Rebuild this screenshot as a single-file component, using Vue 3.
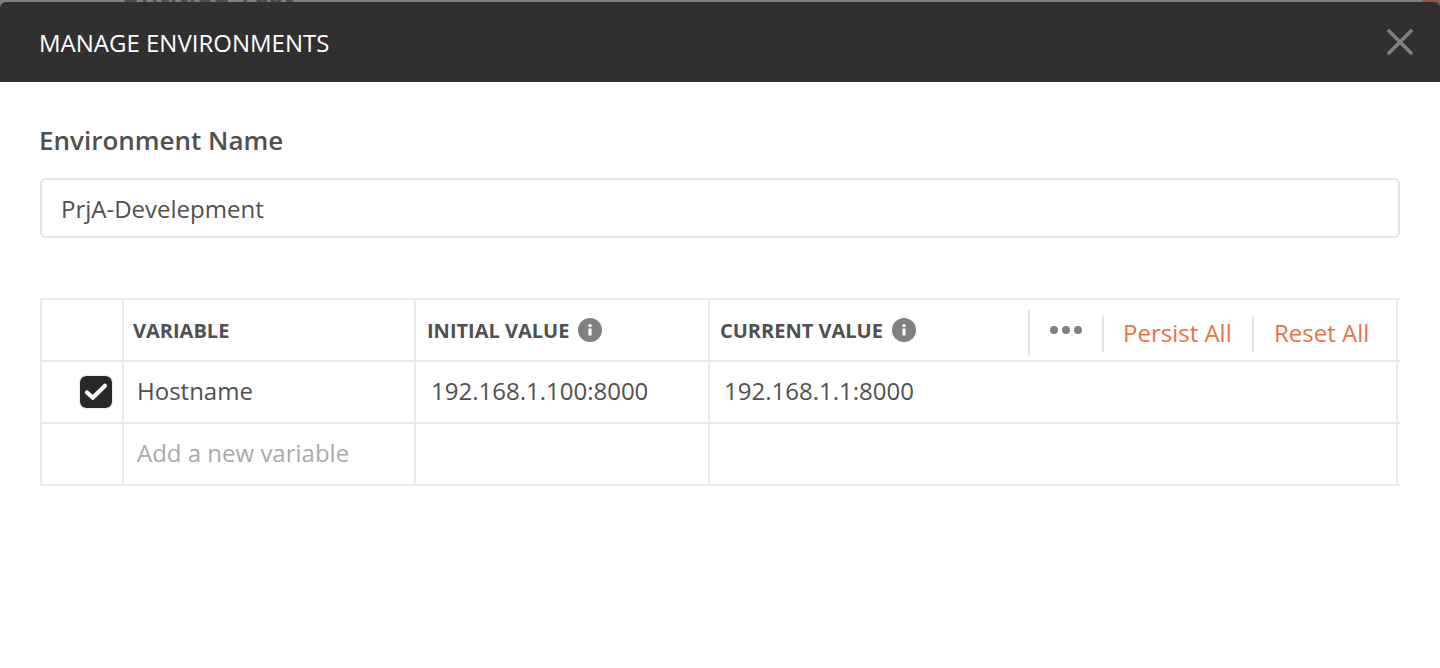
<script setup>
const rows = [
  { name: 'Hostname', initial: '192.168.1.100:8000', current: '192.168.1.1:8000', checked: true },
]
</script>

<template>
  <div class="page">
    <div class="backdrop">
      <span class="behind">Untitled Test</span>
      <span class="accent"></span>
    </div>
    <div class="modal">
      <header class="head">
        <h1 class="title">MANAGE ENVIRONMENTS</h1>
        <svg class="close" width="26" height="26" viewBox="0 0 26 26" aria-label="Close">
          <path d="M2 2 L24 24 M24 2 L2 24" stroke="#808080" stroke-width="3.6" stroke-linecap="round" fill="none" />
        </svg>
      </header>
      <main class="body">
        <label class="label">Environment Name</label>
        <div class="name-input">PrjA-Develepment</div>
        <div class="table">
          <div class="row row-head">
            <div class="cell"></div>
            <div class="cell th">VARIABLE</div>
            <div class="cell th th-initial">
              INITIAL VALUE
              <svg class="info" width="24" height="24" viewBox="0 0 24 24"><circle cx="12" cy="12" r="12" fill="#808080" /><rect x="10.4" y="10.5" width="3.2" height="7" rx="0.6" fill="#fff" /><circle cx="12" cy="7.6" r="1.7" fill="#fff" /></svg>
            </div>
            <div class="cell th th-actions">
              <span class="th-label">
                CURRENT VALUE
                <svg class="info" width="24" height="24" viewBox="0 0 24 24"><circle cx="12" cy="12" r="12" fill="#808080" /><rect x="10.4" y="10.5" width="3.2" height="7" rx="0.6" fill="#fff" /><circle cx="12" cy="7.6" r="1.7" fill="#fff" /></svg>
              </span>
              <div class="actions">
                <div class="more"><i></i><i></i><i></i></div>
                <a class="link persist">Persist All</a>
                <a class="link reset">Reset All</a>
              </div>
            </div>
            <div class="cell"></div>
          </div>
          <div v-for="r in rows" :key="r.name" class="row">
            <div class="cell check-cell">
              <span class="check">
                <svg width="24" height="20" viewBox="0 0 24 20"><path d="M3 10.5 L8.8 15.8 L21 3.8" stroke="#fff" stroke-width="4.2" stroke-linecap="round" stroke-linejoin="round" fill="none" /></svg>
              </span>
            </div>
            <div class="cell td td-name">{{ r.name }}</div>
            <div class="cell td td-initial">{{ r.initial }}</div>
            <div class="cell td td-current">{{ r.current }}</div>
            <div class="cell"></div>
          </div>
          <div class="row">
            <div class="cell"></div>
            <div class="cell td td-name placeholder">Add a new variable</div>
            <div class="cell"></div>
            <div class="cell"></div>
            <div class="cell"></div>
          </div>
        </div>
      </main>
    </div>
  </div>
</template>

<style>
html, body { margin: 0; background: #fff; }
</style>

<style scoped>
.page {
  position: relative;
  width: 1440px;
  height: 668px;
  overflow: hidden;
  font-family: "Open Sans", "Noto Sans", sans-serif;
  background: #fff;
}
.backdrop {
  position: absolute;
  left: 0;
  top: 0;
  width: 100%;
  height: 12px;
  background: #808080;
  overflow: hidden;
}
.behind {
  position: absolute;
  left: 120px;
  top: -22px;
  font-size: 28px;
  line-height: 28px;
  color: #4a4a4a;
  font-weight: 600;
  white-space: nowrap;
}
.accent {
  position: absolute;
  right: 0;
  top: 0;
  width: 18px;
  height: 12px;
  background: #8f5a44;
}
.modal {
  position: relative;
  padding-top: 2px;
}
.head {
  height: 80px;
  background: #303030;
  border-radius: 6px 6px 0 0;
  display: flex;
  align-items: center;
  justify-content: space-between;
  padding: 0 27px 0 39px;
}
.title {
  margin: 2px 0 0;
  color: #fff;
  font-size: 24px;
  font-weight: 400;
  line-height: 30px;
}
.close { display: block; }
.body { padding: 0 40px; background: #fff; }
.label {
  display: block;
  padding-top: 41px;
  margin-left: -1px;
  color: #505050;
  font-size: 26px;
  line-height: 34px;
  font-weight: 600;
}
.name-input {
  box-sizing: border-box;
  height: 60px;
  margin-top: 21px;
  border: 2px solid #e3e3e3;
  border-radius: 6px;
  padding: 0 19px;
  display: flex;
  align-items: center;
  font-size: 24px;
  color: #505050;
}
.table {
  margin-top: 60px;
  border-top: 2px solid #eaeaea;
}
.row {
  display: grid;
  grid-template-columns: 82px 292px 294px 688px 4px;
  height: 62px;
  box-sizing: border-box;
  border-bottom: 2px solid #eaeaea;
}
.cell {
  box-sizing: border-box;
  border-left: 2px solid #eaeaea;
  display: flex;
  align-items: center;
  min-width: 0;
}
.th {
  padding-left: 9px;
  font-size: 20px;
  font-weight: 700;
  color: #505050;
  white-space: nowrap;
}
.th-initial { padding-left: 11px; }
.th-actions { justify-content: space-between; padding-left: 10px; }
.th-label { display: flex; align-items: center; }
.info { margin-left: 9px; display: block; }
.actions {
  display: flex;
  align-items: center;
  height: 100%;
}
.more {
  box-sizing: border-box;
  width: 74px;
  height: 46px;
  margin-top: 6px;
  border-left: 2px solid #e6e6e6;
  display: flex;
  align-items: center;
  justify-content: center;
  gap: 4px;
  padding-bottom: 6px;
}
.more i {
  display: block;
  width: 8px;
  height: 8px;
  border-radius: 50%;
  background: #808080;
}
.link {
  box-sizing: border-box;
  height: 36px;
  margin-top: 8px;
  padding-bottom: 4px;
  border-left: 2px solid #e6e6e6;
  display: flex;
  align-items: center;
  color: #e8734a;
  font-size: 24px;
  font-weight: 400;
}
.persist { width: 150px; padding-left: 19px; }
.reset { width: 144px; padding-left: 20px; }
.td {
  padding-bottom: 4px;
  font-size: 24px;
  color: #505050;
  white-space: nowrap;
}
.td-name { padding-left: 13px; }
.td-initial { padding-left: 15px; }
.td-current { padding-left: 14px; }
.placeholder { color: #a9a9a9; }
.check-cell { justify-content: flex-end; padding-right: 9px; }
.check {
  box-sizing: border-box;
  width: 34px;
  height: 34px;
  border: 1px solid #ececec;
  border-radius: 7px;
  background: #282828;
  background-clip: padding-box;
  display: flex;
  align-items: center;
  justify-content: center;
}
</style>
